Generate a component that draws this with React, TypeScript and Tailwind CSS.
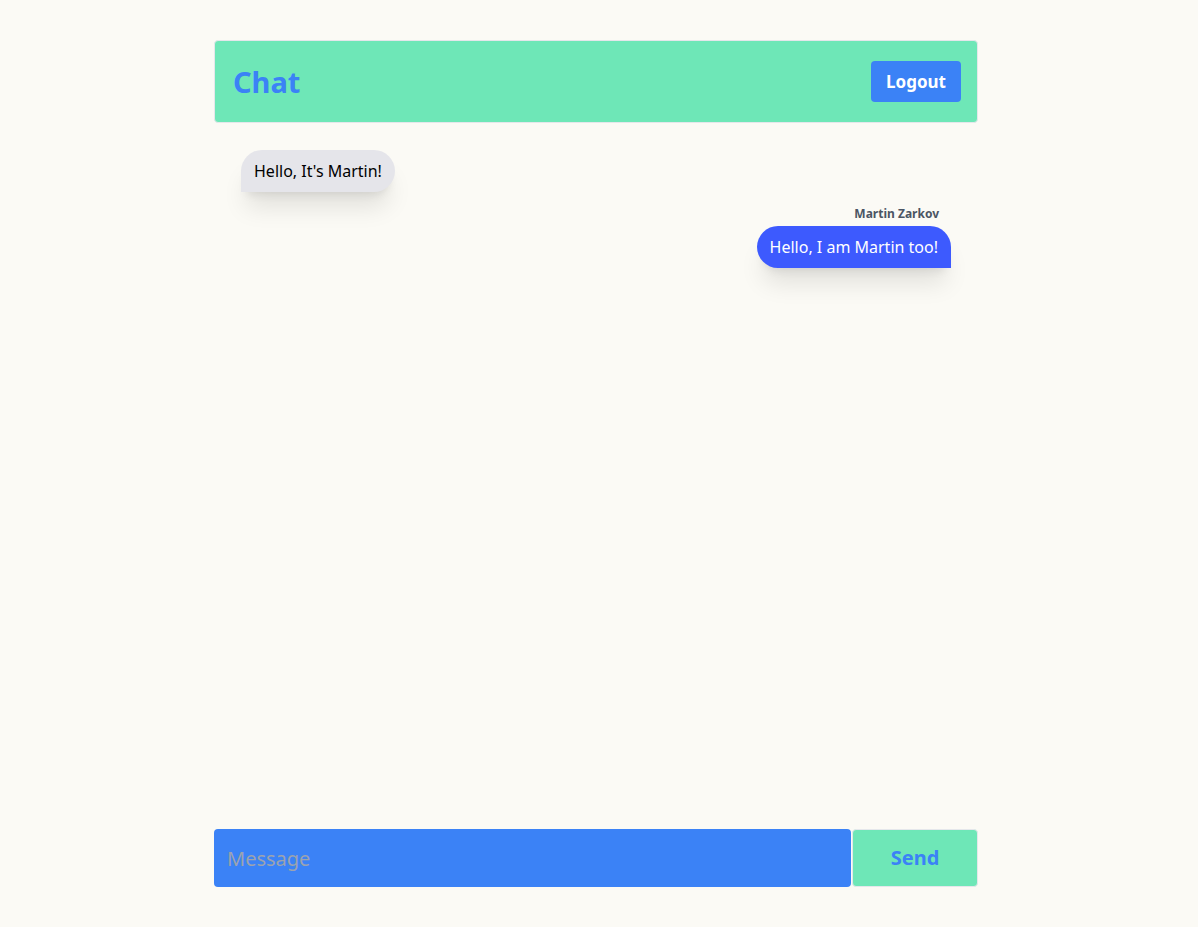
import { useState } from "react";

interface Message {
  id: number;
  text: string;
  author: string | null;
  mine: boolean;
}

const messages: Message[] = [
  { id: 1, text: "Hello, It's Martin!", author: null, mine: false },
  { id: 2, text: "Hello, I am Martin too!", author: "Martin Zarkov", mine: true },
];

export default function App() {
  const [draft, setDraft] = useState("");

  return (
    <div
      className="h-screen w-full bg-[#fbfaf5] py-10"
      style={{ fontFamily: '"Noto Sans", "Open Sans", sans-serif' }}
    >
      <div className="ml-[214px] flex h-full w-[764px] flex-col">
        {/* Header */}
        <div className="flex h-[83px] items-center justify-between rounded border border-[#e5e7eb] bg-[#6ee7b7] pl-[18px] pr-4">
          <h1 className="text-[29px] font-bold text-[#3b82f6]">Chat</h1>
          <button className="h-[41px] w-[90px] rounded bg-[#3b82f6] text-[17px] font-bold text-white">
            Logout
          </button>
        </div>

        {/* Messages */}
        <div className="flex flex-1 flex-col gap-[13px] px-[27px] pt-[27px]">
          {messages.map((m) =>
            m.mine ? (
              <div key={m.id} className="flex flex-col items-end">
                <span className="mb-[3px] mr-3 text-[12px] font-bold text-[#4b5563]">
                  {m.author}
                </span>
                <div className="flex h-[42px] items-center rounded-t-[21px] rounded-bl-[21px] bg-[#3d5afe] px-[13px] text-[16px] text-white shadow-xl">
                  {m.text}
                </div>
              </div>
            ) : (
              <div key={m.id} className="flex">
                <div className="flex h-[42px] items-center rounded-t-[21px] rounded-br-[21px] bg-[#e5e5ea] px-[13px] text-[16px] text-black shadow-xl">
                  {m.text}
                </div>
              </div>
            )
          )}
        </div>

        {/* Composer */}
        <div className="flex h-[58px] gap-px">
          <input
            value={draft}
            onChange={(e) => setDraft(e.target.value)}
            placeholder="Message"
            className="h-full flex-1 rounded bg-[#3b82f6] px-[13px] text-[20px] text-white outline-none placeholder:text-[#9ca3af]"
          />
          <button className="h-full w-[126px] rounded border border-[#e5e7eb] bg-[#6ee7b7] text-[20px] font-bold text-[#3b82f6]">
            Send
          </button>
        </div>
      </div>
    </div>
  );
}
